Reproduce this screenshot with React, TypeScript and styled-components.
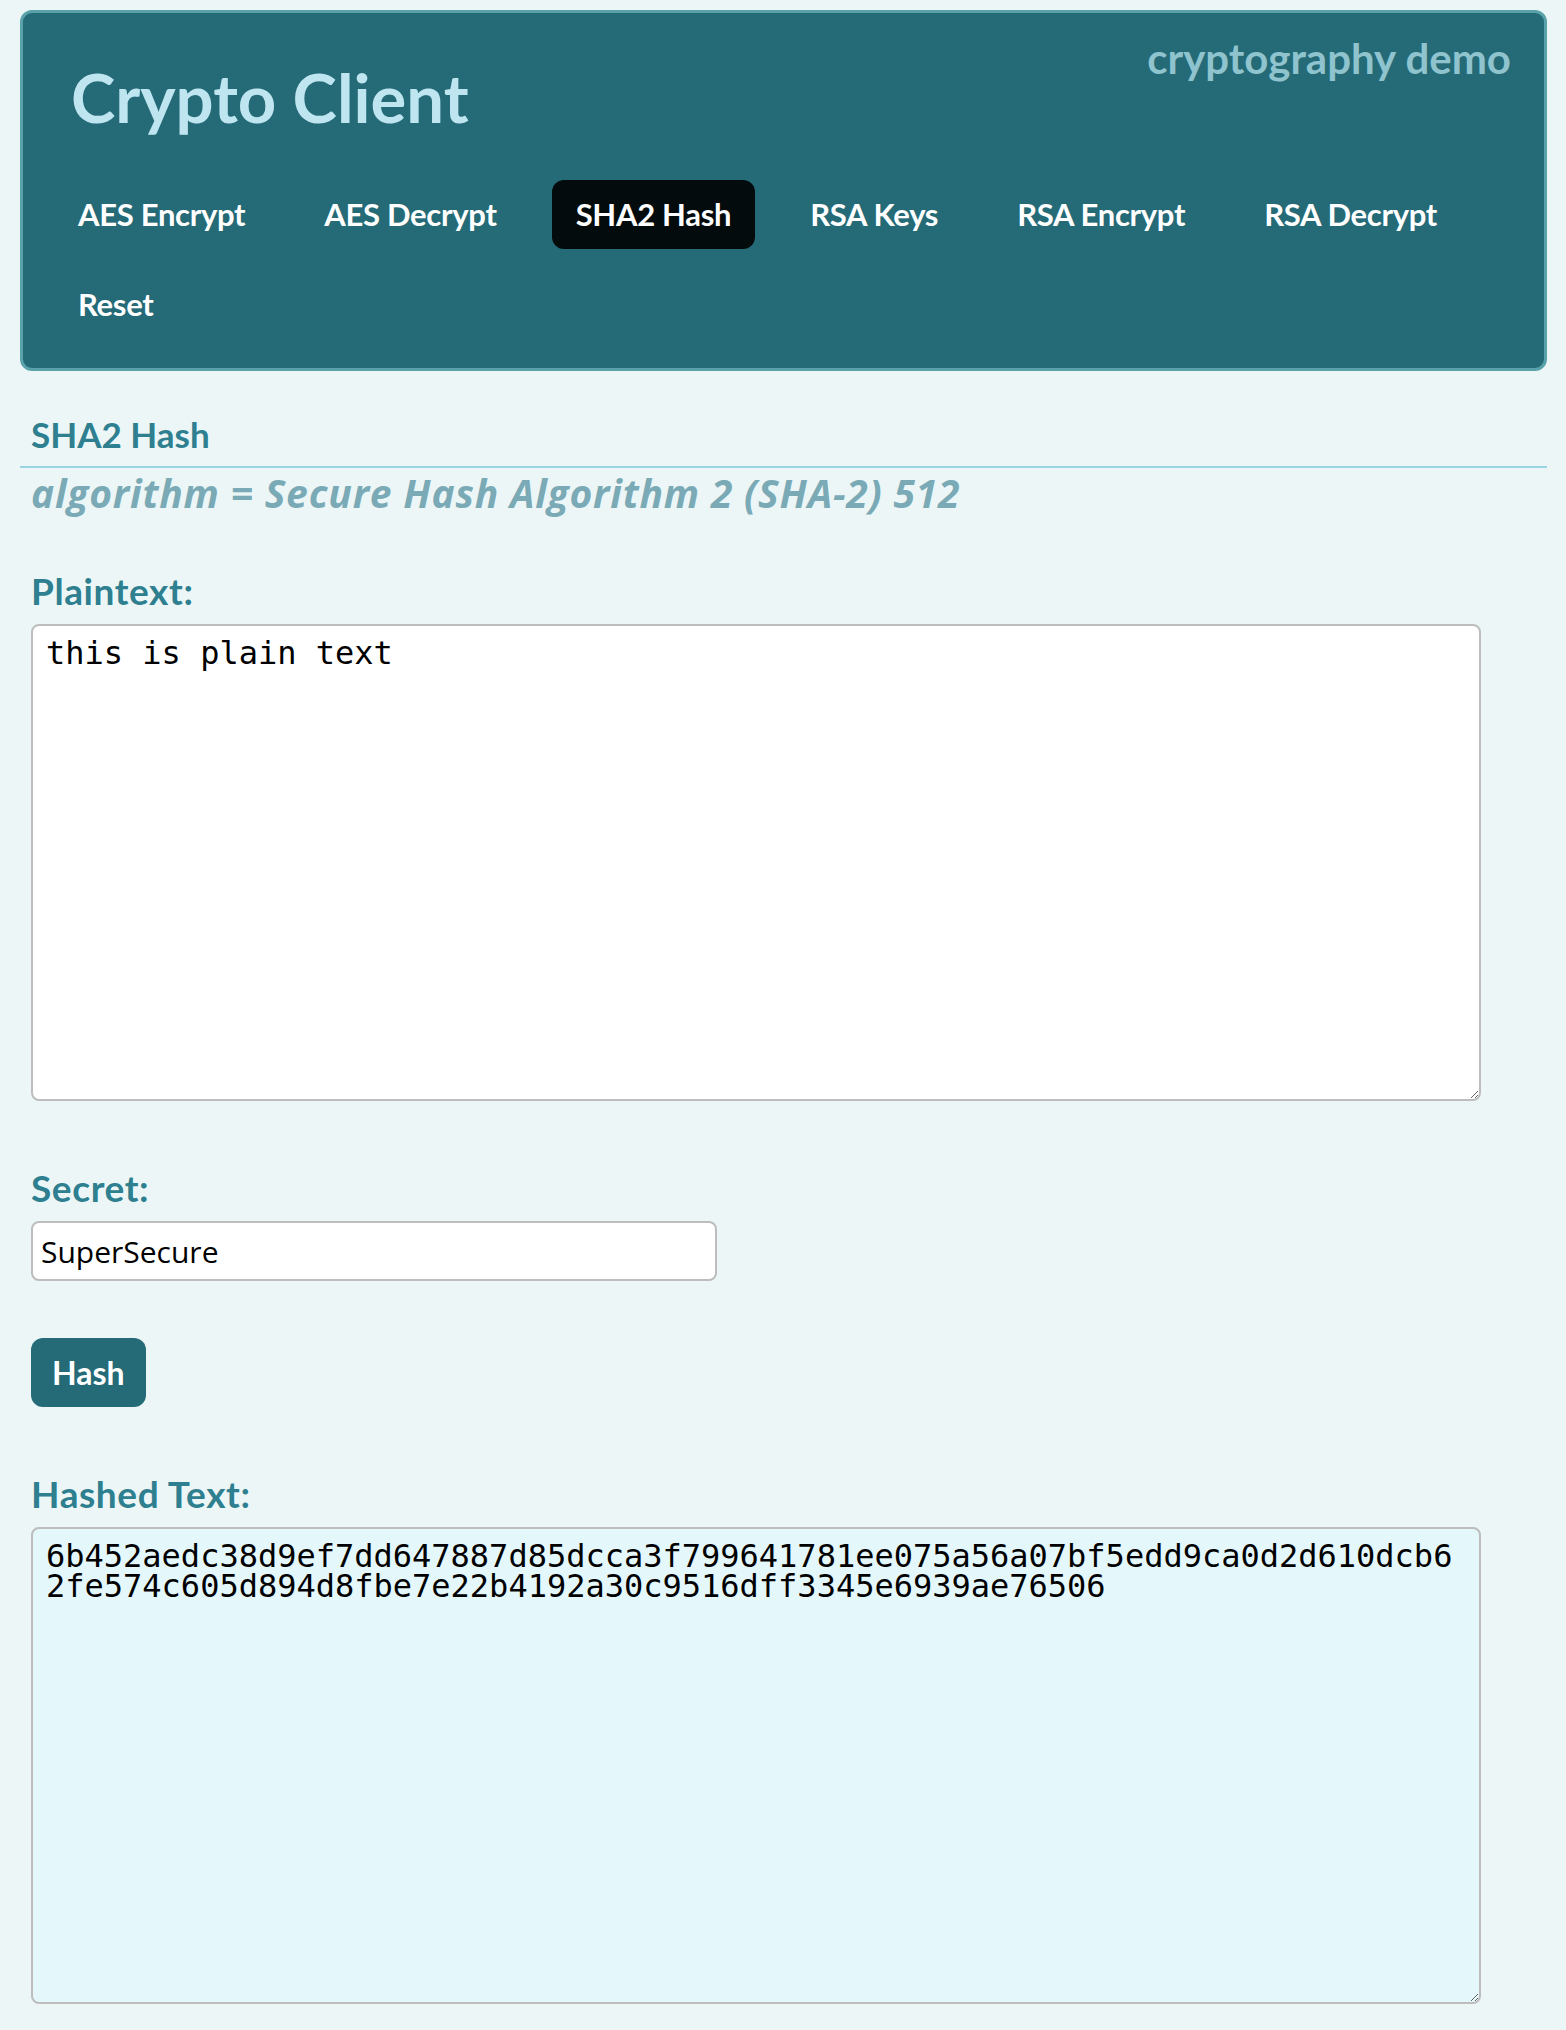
import React from "react";
import styled, { createGlobalStyle } from "styled-components";

const GlobalStyle = createGlobalStyle`
  html, body {
    margin: 0;
    padding: 0;
    background: #edf6f7;
  }
  body {
    font-family: Lato, "Open Sans", sans-serif;
  }
  * {
    box-sizing: border-box;
  }
`;

const Page = styled.div`
  padding: 10px 19px 24px 20px;
`;

const Header = styled.header`
  background: #246a77;
  border: 3px solid #5aa2aa;
  border-radius: 12px;
  padding: 20px 33px 29px 31px;
`;

const HeaderTop = styled.div`
  display: flex;
  justify-content: space-between;
  align-items: flex-start;
`;

const Title = styled.h1`
  margin: 24px 0 0 17px;
  font-family: Lato, sans-serif;
  font-weight: 700;
  font-size: 67px;
  line-height: 80px;
  color: #bfe6f0;
`;

const Tagline = styled.div`
  font-family: Lato, sans-serif;
  font-weight: 700;
  font-size: 42px;
  line-height: 50px;
  color: #8fc3cd;
`;

const Nav = styled.nav`
  display: flex;
  flex-wrap: wrap;
  column-gap: 31px;
  row-gap: 21px;
  margin-top: 43px;
`;

const NavItem = styled.a<{ $active?: boolean }>`
  display: block;
  height: 69px;
  padding: 0 24px;
  line-height: 69px;
  font-family: Lato, sans-serif;
  font-size: 31px;
  letter-spacing: -0.3px;
  font-weight: 700;
  color: #ffffff;
  text-decoration: none;
  border-radius: 12px;
  background: ${(p) => (p.$active ? "#030b0d" : "transparent")};
  cursor: pointer;
`;

const Main = styled.main`
  margin-top: 41px;
`;

const SectionTitle = styled.h3`
  margin: 0;
  padding: 0 11px 10px;
  font-family: Lato, sans-serif;
  font-size: 35px;
  line-height: 44px;
  font-weight: 700;
  color: #2e7f8f;
  border-bottom: 2px solid #98d4e2;
`;

const Body = styled.div`
  padding: 0 11px;
  display: flex;
  flex-direction: column;
  align-items: flex-start;
`;

const Algorithm = styled.p`
  margin: 3px 0 0;
  font-family: "Open Sans", sans-serif;
  font-style: italic;
  font-weight: 700;
  font-size: 39px;
  letter-spacing: 0.8px;
  line-height: 44px;
  color: #7aaab6;
`;

const Form = styled.form`
  display: flex;
  flex-direction: column;
  align-items: flex-start;
  gap: 57px;
  margin-top: 56px;
`;

const Field = styled.div<{ $spaced?: boolean }>`
  display: flex;
  flex-direction: column;
  align-items: flex-start;
  margin-top: ${(p) => (p.$spaced ? "10px" : "0")};
`;

const Label = styled.label`
  margin-bottom: 13px;
  font-family: Lato, sans-serif;
  font-size: 37px;
  letter-spacing: 0.6px;
  line-height: 40px;
  font-weight: 700;
  color: #2e7f8f;
`;

const TextArea = styled.textarea<{ $tint?: boolean }>`
  display: block;
  width: 1450px;
  height: 477px;
  margin: 0;
  padding: 12px 13px;
  border: 2px solid #bdbdbd;
  border-radius: 8px;
  background: ${(p) => (p.$tint ? "#e4f7fb" : "#ffffff")};
  color: #000000;
  font-family: "DejaVu Sans Mono", monospace;
  font-size: 32px;
  line-height: 30px;
  outline: none;
`;

const TextInput = styled.input`
  display: block;
  width: 686px;
  height: 60px;
  margin: 0;
  padding: 0 8px;
  border: 2px solid #bdbdbd;
  border-radius: 8px;
  background: #ffffff;
  color: #000000;
  font-family: "Open Sans", sans-serif;
  font-size: 30px;
  outline: none;
`;

const Button = styled.button`
  height: 69px;
  padding: 0 21px;
  margin: 0;
  border: none;
  border-radius: 12px;
  background: #246a77;
  color: #ffffff;
  font-family: Lato, sans-serif;
  font-size: 32px;
  font-weight: 700;
  cursor: pointer;
`;

const navItems = [
  "AES Encrypt",
  "AES Decrypt",
  "SHA2 Hash",
  "RSA Keys",
  "RSA Encrypt",
  "RSA Decrypt",
  "Reset",
];

const HASH =
  "6b452aedc38d9ef7dd647887d85dcca3f799641781ee075a56a07bf5edd9ca0d2d610dcb62fe574c605d894d8fbe7e22b4192a30c9516dff3345e6939ae76506";

export default function App() {
  return (
    <Page>
      <GlobalStyle />
      <Header>
        <HeaderTop>
          <Title>Crypto Client</Title>
          <Tagline>cryptography demo</Tagline>
        </HeaderTop>
        <Nav>
          {navItems.map((item) => (
            <NavItem key={item} $active={item === "SHA2 Hash"}>
              {item}
            </NavItem>
          ))}
        </Nav>
      </Header>
      <Main>
        <SectionTitle>SHA2 Hash</SectionTitle>
        <Body>
          <Algorithm>algorithm = Secure Hash Algorithm 2 (SHA-2) 512</Algorithm>
          <Form onSubmit={(e) => e.preventDefault()}>
            <Field>
              <Label>Plaintext:</Label>
              <TextArea defaultValue="this is plain text" />
            </Field>
            <Field $spaced>
              <Label>Secret:</Label>
              <TextInput type="text" defaultValue="SuperSecure" />
            </Field>
            <Button type="submit">Hash</Button>
            <Field $spaced>
              <Label>Hashed Text:</Label>
              <TextArea $tint readOnly defaultValue={HASH} />
            </Field>
          </Form>
        </Body>
      </Main>
    </Page>
  );
}
